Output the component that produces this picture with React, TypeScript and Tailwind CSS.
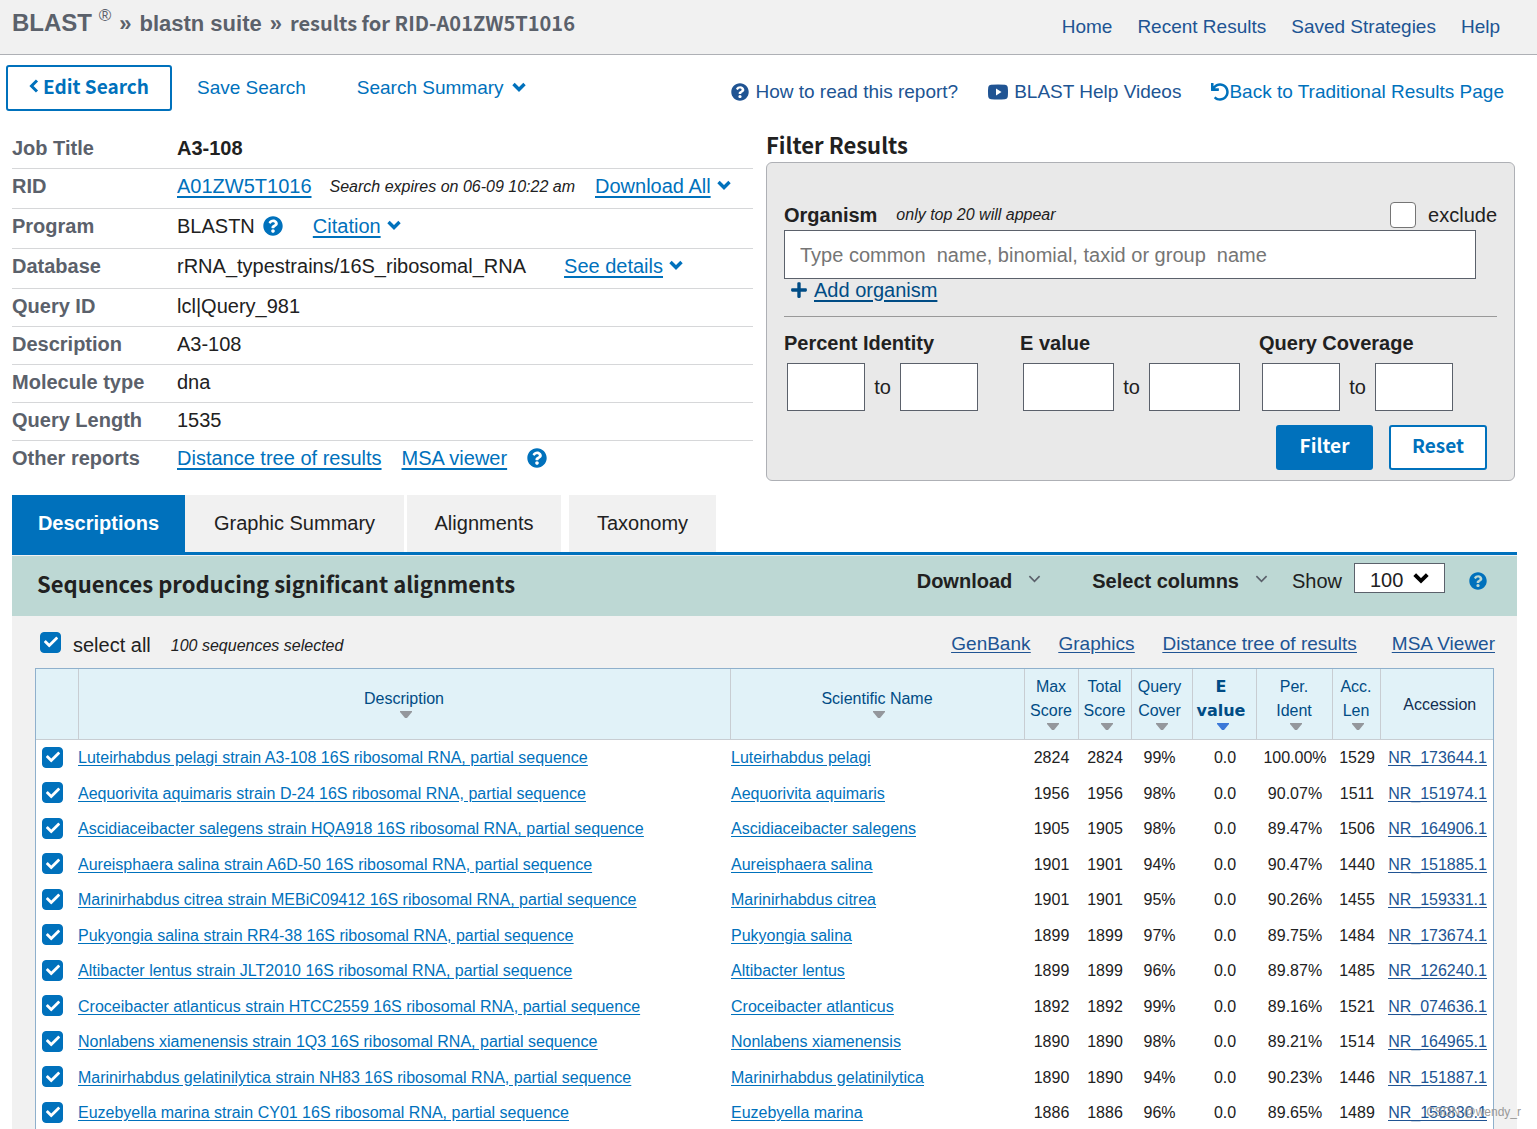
import type { ReactNode } from "react";
import { FaCheck, FaPlus, FaQuestionCircle, FaUndo } from "react-icons/fa";

const rows = [
  ["Luteirhabdus pelagi", "strain A3-108", "2824", "99%", "100.00%", "1529", "NR_173644.1"],
  ["Aequorivita aquimaris", "strain D-24", "1956", "98%", "90.07%", "1511", "NR_151974.1"],
  ["Ascidiaceibacter salegens", "strain HQA918", "1905", "98%", "89.47%", "1506", "NR_164906.1"],
  ["Aureisphaera salina", "strain A6D-50", "1901", "94%", "90.47%", "1440", "NR_151885.1"],
  ["Marinirhabdus citrea", "strain MEBiC09412", "1901", "95%", "90.26%", "1455", "NR_159331.1"],
  ["Pukyongia salina", "strain RR4-38", "1899", "97%", "89.75%", "1484", "NR_173674.1"],
  ["Altibacter lentus", "strain JLT2010", "1899", "96%", "89.87%", "1485", "NR_126240.1"],
  ["Croceibacter atlanticus", "strain HTCC2559", "1892", "99%", "89.16%", "1521", "NR_074636.1"],
  ["Nonlabens xiamenensis", "strain 1Q3", "1890", "98%", "89.21%", "1514", "NR_164965.1"],
  ["Marinirhabdus gelatinilytica", "strain NH83", "1890", "94%", "90.23%", "1446", "NR_151887.1"],
  ["Euzebyella marina", "strain CY01", "1886", "96%", "89.65%", "1489", "NR_156830.1"],
];

const scoreColumns = [
  ["Max", "Score"],
  ["Total", "Score"],
  ["Query", "Cover"],
  ["E", "value"],
  ["Per.", "Ident"],
  ["Acc.", "Len"],
];

function Chevron({ className, thin }: { className: string; thin?: boolean }) {
  return (
    <svg viewBox="0 0 14 10" fill="none" stroke="currentColor" strokeWidth={thin ? 1.8 : 3.4} className={className}>
      <path d="M1.5 2 7 7.5 12.5 2" />
    </svg>
  );
}

function Link({ children }: { children: ReactNode }) {
  return (
    <a href="#" className="text-[#0071bc] underline decoration-2 underline-offset-3">
      {children}
    </a>
  );
}

function DropLink({ children }: { children: ReactNode }) {
  return (
    <span className="flex items-center gap-1.5">
      <Link>{children}</Link>
      <Chevron className="mb-0.5 h-[10px] w-3.5 text-[#0071bc]" />
    </span>
  );
}

function InfoRow({ label, tall, children }: { label: string; tall?: boolean; children: ReactNode }) {
  return (
    <div
      className={`flex items-center border-b border-[#d6d7d9] last:border-b-0 ${tall ? "h-10 pb-1.5" : "h-[38px] pb-1"}`}
    >
      <dt className="w-[165px] shrink-0 font-bold text-[#5b616b]">{label}</dt>
      <dd className="flex items-center">{children}</dd>
    </div>
  );
}

function Check({ label }: { label: string }) {
  return (
    <span className="grid size-[21px] place-items-center">
      <input
        type="checkbox"
        defaultChecked
        aria-label={label}
        className="peer size-[21px] appearance-none rounded border border-[#757575] bg-white checked:border-[#0071bc] checked:bg-[#0071bc] [grid-area:1/1]"
      />
      <FaCheck className="pointer-events-none hidden size-3.5 text-white peer-checked:block [grid-area:1/1]" />
    </span>
  );
}

function SortArrow({ active }: { active?: boolean }) {
  return (
    <svg viewBox="0 0 12 7" className={`ml-1 h-[7px] w-3 ${active ? "text-[#3c78d8]" : "text-[#94979c]"}`}>
      <path d="M0 0h12v1L7 7H5L0 1z" fill="currentColor" />
    </svg>
  );
}

function Range({ title, box }: { title: string; box: string }) {
  return (
    <fieldset>
      <legend className="font-bold leading-6">{title}</legend>
      <div className="mt-2 ml-[3px] flex items-center">
        <input type="text" aria-label={`${title} from`} className={`h-12 border border-[#5b616b] bg-white ${box}`} />
        <span className="w-[35px] text-center">to</span>
        <input type="text" aria-label={`${title} to`} className={`h-12 border border-[#5b616b] bg-white ${box}`} />
      </div>
    </fieldset>
  );
}

export default function App() {
  return (
    <div className="relative h-screen overflow-hidden bg-white font-['Liberation_Sans',Arial,sans-serif] text-[20px] text-[#212121]">
      <header className="flex h-[55px] items-center justify-between border-b border-[#aeb0b5] bg-[#f1f1f1] pr-[37px] pl-3">
        <h1 className="flex items-baseline gap-2 pb-2 text-[22px] leading-8 font-bold text-[#5b616b]">
          <span className="text-[24px]">
            BLAST <sup className="-top-2.5 text-[17px] font-normal">®</sup>
          </span>
          <span>»</span>
          <span>blastn suite</span>
          <span>»</span>
          <span className="font-['Noto_Sans_CJK_SC',sans-serif] text-[20px]">results for RID-A01ZW5T1016</span>
        </h1>
        <nav className="flex gap-[25px] text-[19px] text-[#205493]">
          <a href="#">Home</a>
          <a href="#">Recent Results</a>
          <a href="#">Saved Strategies</a>
          <a href="#">Help</a>
        </nav>
      </header>

      <div className="flex items-center justify-between pt-2.5 pr-[33px] pl-1.5 text-[19px]">
        <div className="flex items-center text-[#0071bc]">
          <button className="flex h-[46px] w-[166px] items-center justify-center gap-1 rounded-[3px] border-2 border-[#0071bc] bg-white pb-1 font-['Noto_Sans_CJK_SC',sans-serif] text-[19px] font-bold">
            <svg viewBox="0 0 10 14" fill="none" stroke="currentColor" strokeWidth="3" className="h-3.5 w-2.5">
              <path d="M8 1.5 2.5 7 8 12.5" />
            </svg>
            Edit Search
          </button>
          <a href="#" className="ml-[25px]">
            Save Search
          </a>
          <a href="#" className="ml-[51px] flex items-center gap-2">
            Search Summary
            <Chevron className="mb-0.5 h-[10px] w-3.5" />
          </a>
        </div>
        <div className="flex gap-[30px] pt-2 text-[#205493]">
          <a href="#" className="flex items-center gap-1.5">
            <FaQuestionCircle className="size-[18px]" />
            How to read this report?
          </a>
          <a href="#" className="flex items-center gap-1.5">
            <svg viewBox="0 0 20 16" className="h-4 w-5">
              <path
                d="M3 .8Q10 .2 17 .8q2.500.2 2.700 2.200.6 5 0 10-.2 2-2.700 2.200-7 .6-14 0Q.5 15 .3 13-.3 8 .3 3 .5 1 3 .8z"
                fill="currentColor"
              />
              <path d="M8 4.600v6.800L13.500 8z" fill="white" />
            </svg>
            BLAST Help Videos
          </a>
          <a href="#" className="flex items-center text-[#0071bc]">
            <FaUndo className="size-[18px]" />
            Back to Traditional Results Page
          </a>
        </div>
      </div>

      <div className="flex gap-[13px] pr-[22px] pl-3">
        <dl className="mt-5 w-[741px] shrink-0">
          <InfoRow label="Job Title">
            <b>A3-108</b>
          </InfoRow>
          <InfoRow label="RID" tall>
            <Link>A01ZW5T1016</Link>
            <i className="mr-5 ml-[18px] pt-0.5 text-[16px]">Search expires on 06-09 10:22 am</i>
            <DropLink>Download All</DropLink>
          </InfoRow>
          <InfoRow label="Program" tall>
            BLASTN
            <FaQuestionCircle className="mr-[30px] ml-2 size-5 text-[#0071bc]" />
            <DropLink>Citation</DropLink>
          </InfoRow>
          <InfoRow label="Database" tall>
            <span className="mr-[38px]">rRNA_typestrains/16S_ribosomal_RNA</span>
            <DropLink>See details</DropLink>
          </InfoRow>
          <InfoRow label="Query ID">lcl|Query_981</InfoRow>
          <InfoRow label="Description">A3-108</InfoRow>
          <InfoRow label="Molecule type">dna</InfoRow>
          <InfoRow label="Query Length">1535</InfoRow>
          <InfoRow label="Other reports">
            <span className="flex items-center gap-5">
              <Link>Distance tree of results</Link>
              <Link>MSA viewer</Link>
              <FaQuestionCircle className="size-5 text-[#0071bc]" />
            </span>
          </InfoRow>
        </dl>

        <section className="mt-[17px] grow">
          <h2 className="mb-0.5 font-['Noto_Sans_CJK_SC',sans-serif] text-[22px] leading-8 font-bold">
            Filter Results
          </h2>
          <div className="rounded-md border border-[#aeb0b5] bg-[#e9e9e9] px-[17px] pt-9 pb-2.5">
            <div className="flex h-[31px] items-center">
              <label htmlFor="organism" className="font-bold">
                Organism
              </label>
              <i className="ml-[19px] text-[16px]">only top 20 will appear</i>
              <label className="ml-auto flex items-center gap-3">
                <input
                  type="checkbox"
                  className="size-[26px] appearance-none rounded border border-[#757575] bg-white"
                />
                exclude
              </label>
            </div>
            <input
              id="organism"
              type="text"
              placeholder="Type common  name, binomial, taxid or group  name"
              className="block h-[49px] w-[692px] border border-[#5b616b] bg-white px-[15px] pt-0.5 placeholder:text-[#757575]"
            />
            <a href="#" className="ml-1.5 flex h-[21px] items-center gap-1.5 text-[#004c85]">
              <FaPlus className="size-[18px]" />
              <span className="underline decoration-2 underline-offset-3">Add organism</span>
            </a>
            <hr className="mt-4 border-[#999]" />
            <div className="mt-3.5 flex">
              <div className="w-[236px]">
                <Range title="Percent Identity" box="w-[78px]" />
              </div>
              <div className="w-[239px]">
                <Range title="E value" box="w-[91px]" />
              </div>
              <Range title="Query Coverage" box="w-[78px]" />
            </div>
            <div className="mt-3.5 mr-2.5 flex justify-end gap-4 font-['Noto_Sans_CJK_SC',sans-serif] text-[19px] font-bold">
              <button className="h-[45px] w-[97px] rounded-[3px] bg-[#0071bc] pb-1 text-white">Filter</button>
              <button className="h-[45px] w-[98px] rounded-[3px] border-2 border-[#0071bc] bg-white pb-1 text-[#0071bc]">
                Reset
              </button>
            </div>
          </div>
        </section>
      </div>

      <main className="mt-3.5 mr-5 ml-3">
        <div className="flex border-b-3 border-[#0071bc] *:h-[57px] *:pb-0.5">
          <button className="w-[173px] bg-[#0071bc] font-bold text-white">Descriptions</button>
          <button className="w-[219px] bg-[#f1f1f1]">Graphic Summary</button>
          <button className="ml-[3px] w-[154px] bg-[#f1f1f1]">Alignments</button>
          <button className="ml-2 w-[147px] bg-[#f1f1f1]">Taxonomy</button>
        </div>
        <div className="bg-[#f1f1f1] pt-px">
          <div className="flex h-[60px] items-center bg-[#bdd8d4] pr-[30px] pl-[25px]">
            <h2 className="pb-1.5 font-['Noto_Sans_CJK_SC',sans-serif] text-[22px] font-bold">
              Sequences producing significant alignments
            </h2>
            <div className="ml-auto flex items-center pb-2.5">
              <button className="flex items-center gap-4 font-bold">
                Download
                <Chevron thin className="mb-1 h-[10px] w-[13px] text-[#5b616b]" />
              </button>
              <button className="ml-[51px] flex items-center gap-4 font-bold">
                Select columns
                <Chevron thin className="mb-1 h-[10px] w-[13px] text-[#5b616b]" />
              </button>
              <label htmlFor="show" className="mr-3 ml-6">
                Show
              </label>
              <span className="grid items-center pb-1.5">
                <select
                  id="show"
                  defaultValue="100"
                  className="h-[30px] w-[91px] appearance-none border border-[#5b616b] bg-white pt-px pl-[15px] [grid-area:1/1]"
                >
                  <option>10</option>
                  <option>50</option>
                  <option>100</option>
                </select>
                <Chevron className="pointer-events-none mr-4 h-3 w-4 justify-self-end text-black [grid-area:1/1]" />
              </span>
              <FaQuestionCircle className="ml-6 size-[18px] text-[#0071bc]" />
            </div>
          </div>

          <div className="flex h-[52px] items-center pr-[22px] pl-7">
            <Check label="select all" />
            <span className="ml-3 pt-1.5">select all</span>
            <i className="ml-5 pt-2 text-[16px]">100 sequences selected</i>
            <div className="ml-auto flex pt-1 text-[19px] text-[#205493] underline underline-offset-2">
              <a href="#">GenBank</a>
              <a href="#" className="ml-7">
                Graphics
              </a>
              <a href="#" className="ml-7">
                Distance tree of results
              </a>
              <a href="#" className="ml-[35px]">
                MSA Viewer
              </a>
            </div>
          </div>

          <div className="mr-[23px] ml-[23px] border border-[#8fb0cc] bg-white text-[16px]">
            <table className="w-full table-fixed">
              <colgroup>
                <col className="w-[42px]" />
                <col />
                <col className="w-[294px]" />
                <col className="w-[54px]" />
                <col className="w-[53px]" />
                <col className="w-[61px]" />
                <col className="w-[64px]" />
                <col className="w-[76px]" />
                <col className="w-[48px]" />
                <col className="w-[113px]" />
              </colgroup>
              <thead className="bg-[#e1f2f8] text-[#004c85]">
                <tr className="h-[70px] *:border-r *:border-b *:border-[#c8cdd2] *:px-0 *:pt-0 *:pb-0.5 *:font-normal *:last:border-r-0">
                  <th aria-label="Select" />
                  <th>
                    <div className="flex flex-col items-center">
                      Description
                      <SortArrow />
                    </div>
                  </th>
                  <th>
                    <div className="flex flex-col items-center">
                      Scientific Name
                      <SortArrow />
                    </div>
                  </th>
                  {scoreColumns.map(([top, bottom]) => (
                    <th key={top}>
                      <div
                        className={`flex flex-col items-center leading-6 ${top === "Query" ? "pr-1" : ""} ${top === "E" ? "pr-1.5 font-['DejaVu_Sans',sans-serif] font-bold" : ""}`}
                      >
                        <span>{top}</span>
                        <span>{bottom}</span>
                        <SortArrow active={top === "E"} />
                      </div>
                    </th>
                  ))}
                  <th className="pt-0.5! pb-0! pl-1.5! text-[#112e51]">Accession</th>
                </tr>
              </thead>
              <tbody>
                {rows.map(([name, strain, score, cover, ident, len, acc]) => (
                  <tr key={acc} className="text-center *:px-0 *:pt-0.5 *:pb-0 odd:h-9 even:h-[35px]">
                    <td className="pt-0! pl-1.5!">
                      <Check label={name} />
                    </td>
                    <td className="text-left text-[#0071bc] underline underline-offset-2">
                      <a href="#">
                        {name} {strain} 16S ribosomal RNA, partial sequence
                      </a>
                    </td>
                    <td className="pl-px! text-left text-[#0071bc] underline underline-offset-2">
                      <a href="#">{name}</a>
                    </td>
                    <td className="pl-px!">{score}</td>
                    <td className="pl-px!">{score}</td>
                    <td className="pr-1!">{cover}</td>
                    <td className="pl-0.5!">0.0</td>
                    <td className="pl-0.5!">{ident}</td>
                    <td className="pl-0.5!">{len}</td>
                    <td className="pl-0.5! text-[#205493] underline underline-offset-2">
                      <a href="#">{acc}</a>
                    </td>
                  </tr>
                ))}
              </tbody>
            </table>
          </div>
        </div>
      </main>

      <span className="pointer-events-none absolute right-4 bottom-2 text-[12px] text-[#999]">CSDN @wendy_r</span>
    </div>
  );
}
